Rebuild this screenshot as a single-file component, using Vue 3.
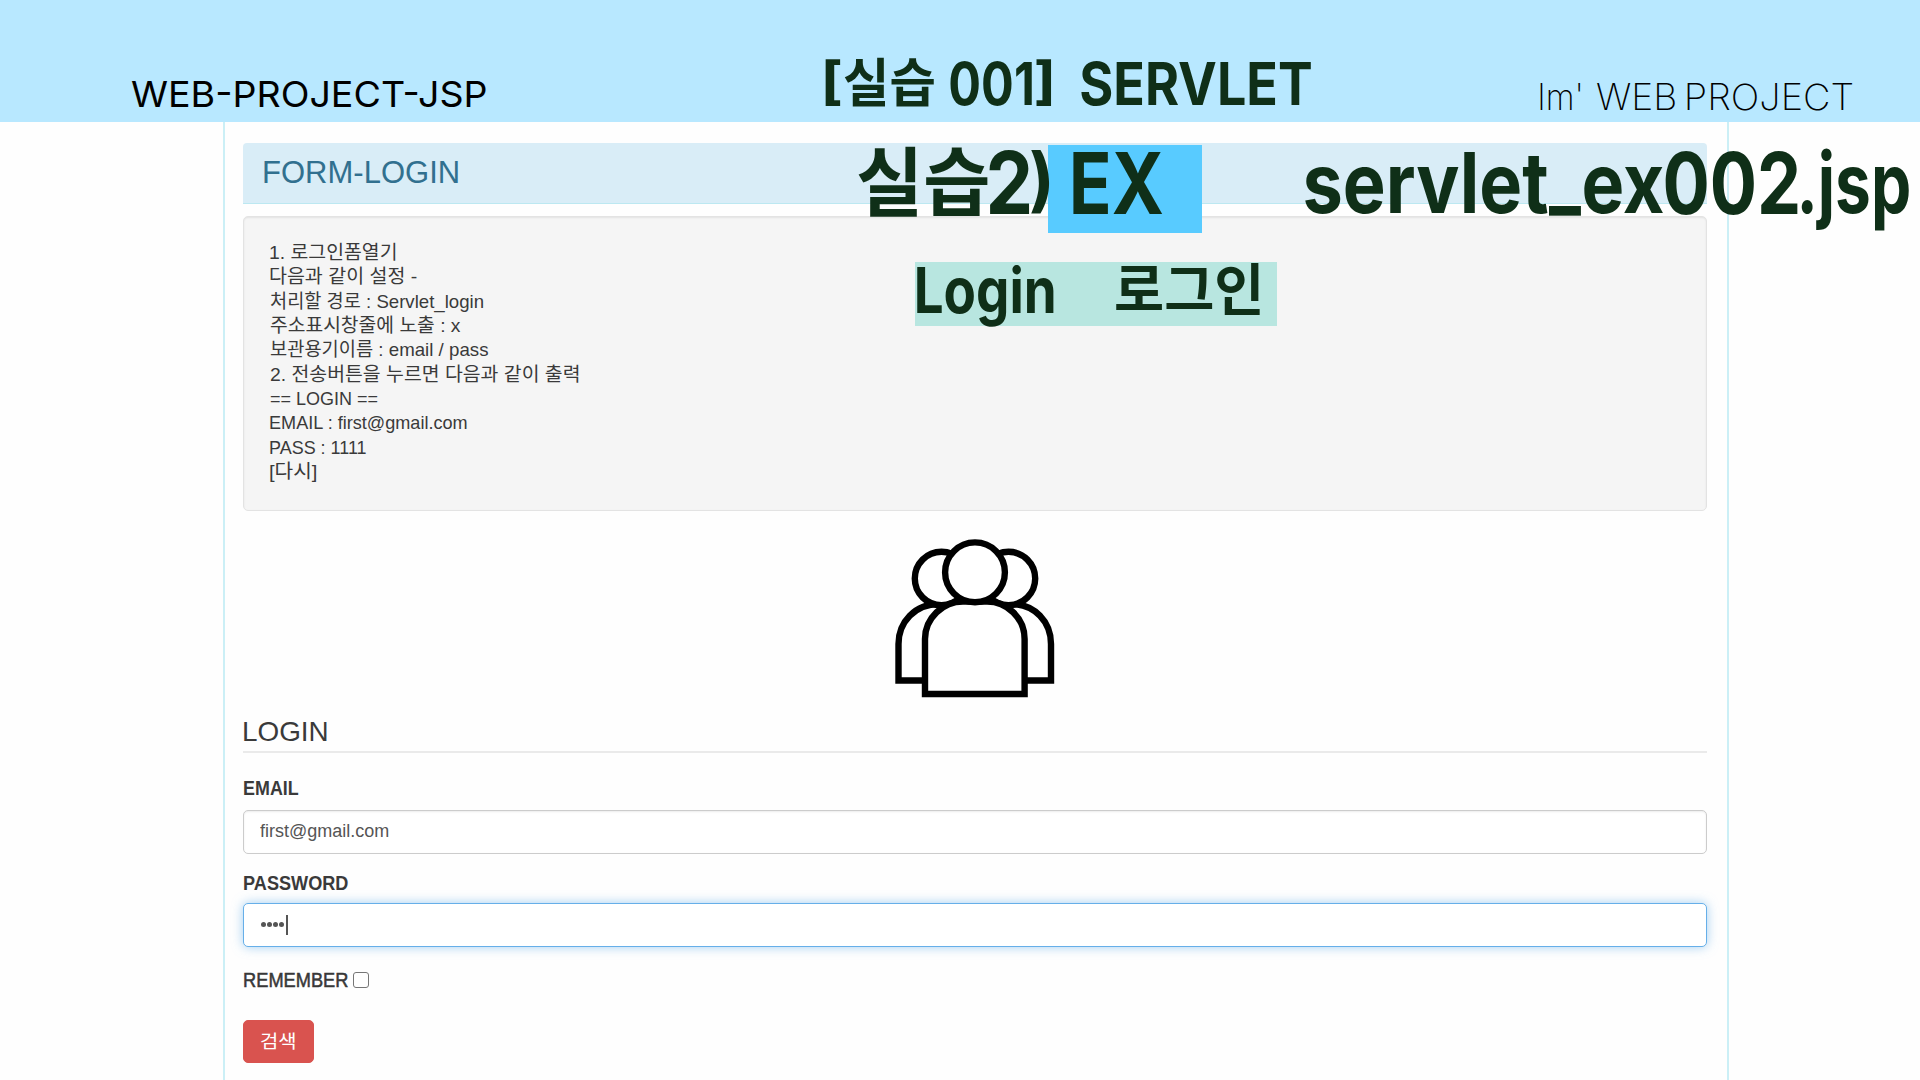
<script setup>
import { ref } from 'vue'

const email = ref('first@gmail.com')

// Scales a text horizontally so that its ink starts at the element's left edge
// and spans the given width.
const vInk = {
  mounted(el, { value }) {
    const cs = getComputedStyle(el)
    const ctx = document.createElement('canvas').getContext('2d')
    ctx.font = `${cs.fontWeight} ${cs.fontSize} ${cs.fontFamily}`
    const m = ctx.measureText(el.textContent)
    const ink = m.actualBoundingBoxRight + m.actualBoundingBoxLeft
    const s = value / ink
    el.style.transform = `translateX(${m.actualBoundingBoxLeft * s}px) scaleX(${s})`
  },
}

const titleParts = [
  { text: '[', w: 15.5, gap: 0, cls: 'latin bracket' },
  { text: '실습', w: 90, gap: 3, cls: 'hangul' },
  { text: '001', w: 82, gap: 16.5, cls: 'latin' },
  { text: ']', w: 15.5, gap: 3.5, cls: 'latin bracket' },
  { text: 'SERVLET', w: 230.5, gap: 30, cls: 'latin' },
]

const notes = [
  { text: '1. 로그인폼열기', w: 126 },
  { text: '다음과 같이 설정 -', w: 147 },
  { text: '처리할 경로 : Servlet_login', w: 213.5 },
  { text: '주소표시창줄에 노출 : x', w: 191 },
  { text: '보관용기이름 : email / pass', w: 218 },
  { text: '2. 전송버튼을 누르면 다음과 같이 출력', w: 309 },
  { text: '== LOGIN ==', w: 108 },
  { text: 'EMAIL : first@gmail.com', w: 197.5 },
  { text: 'PASS : 1111', w: 96 },
  { text: '[다시]', w: 46 },
]

// Captions laid over the page: x, baseline y, ink width, font size.
const captions = [
  { text: '실습', x: 857.5, y: 210.5, w: 129.5, size: 75, cls: 'hangul' },
  { text: '2', x: 989, y: 214, w: 40.5, size: 86, cls: 'latin' },
  { text: ')', x: 1031, y: 204, w: 18.5, size: 70, cls: 'latin' },
  { text: 'EX', x: 1072.5, y: 214, w: 89.5, size: 85, cls: 'latin' },
  { text: 'servlet', x: 1305, y: 214, w: 243, size: 84, cls: 'latin' },
  { text: '_', x: 1549, y: 206, w: 32, size: 86, cls: 'latin' },
  { text: 'ex', x: 1584, y: 214, w: 79, size: 84, cls: 'latin' },
  { text: '002', x: 1665, y: 214, w: 132.5, size: 85, cls: 'latin' },
  { text: '.jsp', x: 1801, y: 214, w: 108, size: 84, cls: 'latin' },
  { text: 'Login', x: 917, y: 313, w: 137, size: 63, cls: 'latin' },
  { text: '로그인', x: 1116, y: 310, w: 144, size: 56, cls: 'hangul' },
]
const ascent = { latin: 0.864, hangul: 0.936 }
</script>

<template>
  <div class="page">
    <header class="bar">
      <span v-ink="355.5" class="brand">WEB-PROJECT-JSP</span>
      <h1 class="title">
        <span
          v-for="p in titleParts"
          :key="p.text"
          class="part"
          :style="{ width: p.w + 'px', marginLeft: p.gap + 'px' }"
        ><span v-ink="p.w" class="ink" :class="p.cls">{{ p.text }}</span></span>
      </h1>
      <span class="tag">
        <span v-ink="40" class="ink im">Im'</span>
        <span v-ink="78" class="ink web">WEB</span>
        <span v-ink="165.5" class="ink">PROJECT</span>
      </span>
    </header>

    <main class="panel">
      <h2 class="heading"><span v-ink="194.5" class="ink">FORM-LOGIN</span></h2>

      <section class="well">
        <p v-for="n in notes" :key="n.text"><span v-ink="n.w" class="ink">{{ n.text }}</span></p>
      </section>

      <svg class="users" viewBox="0 0 160 160" fill="#fff" stroke="#000" stroke-width="6.4">
        <path d="M44 56C20 56 3.500 74 3.500 96V132.500H31" />
        <path d="M116 56C140 56 156 74 156 96V132.500H129" />
        <circle cx="46.500" cy="30.500" r="26.700" />
        <circle cx="113.500" cy="30.500" r="26.700" />
        <path d="M30 146V91C30 70 48 53.500 68 53.500H92C112 53.500 129.600 70 129.600 91V146Z" />
        <circle cx="80" cy="24.300" r="29.900" />
      </svg>

      <form class="form" @submit.prevent>
        <h3 class="legend"><span v-ink="82.5" class="ink">LOGIN</span></h3>
        <label class="label first"><span v-ink="54.5" class="ink">EMAIL</span></label>
        <input v-model="email" class="field" type="text" />
        <label class="label second"><span v-ink="104" class="ink">PASSWORD</span></label>
        <div class="field focused"><i v-for="n in 4" :key="n" class="dot"></i><i class="caret"></i></div>
        <label class="remember"><span v-ink="104" class="ink">REMEMBER</span><i class="check"></i></label>
        <button class="submit" type="submit"><span v-ink="34.5" class="ink">검색</span></button>
      </form>
    </main>

    <div class="mark blue"></div>
    <div class="mark green"></div>
    <span
      v-for="c in captions"
      :key="c.text"
      v-ink="c.w"
      class="caption"
      :class="c.cls"
      :style="{ left: c.x + 'px', top: c.y - c.size * ascent[c.cls] + 'px', fontSize: c.size + 'px' }"
    >{{ c.text }}</span>
  </div>
</template>

<style>
body {
  margin: 0;
  overflow: hidden;
}
</style>

<style scoped>
.page {
  position: relative;
  width: 1920px;
  height: 1080px;
  overflow: hidden;
  background: #fefefe;
  font-family: "Liberation Sans", "Noto Sans CJK KR", sans-serif;
  color: #3a3a3a;
}
.ink,
.brand,
.caption {
  display: inline-block;
  white-space: pre;
  transform-origin: 0 50%;
}
.latin {
  font-family: Inter, sans-serif;
  font-weight: 700;
}
.hangul {
  font-family: "Noto Sans CJK KR", sans-serif;
  font-weight: 700;
}
.bar {
  display: flex;
  align-items: flex-start;
  box-sizing: border-box;
  height: 122px;
  padding-left: 131px;
  background: #b8e8ff;
  font-family: Inter, sans-serif;
  color: #000;
}
.brand {
  width: 355.5px;
  margin-top: 76px;
  font-size: 36px;
  line-height: 36px;
  font-weight: 400;
}
.title {
  display: flex;
  align-items: baseline;
  width: 487px;
  margin: 53px 0 0 338.5px;
  font-size: 59px;
  line-height: 59px;
  color: #0f2f18;
}
.part {
  flex: none;
}
.title .hangul {
  position: relative;
  top: -3px;
  font-size: 52px;
}
.title .bracket {
  position: relative;
  top: -6px;
  font-size: 51px;
}
.tag {
  display: flex;
  margin: 79px 0 0 228px;
  font-size: 36px;
  line-height: 36px;
  font-weight: 200;
}
.im {
  width: 57px;
}
.web {
  width: 89.5px;
}
.panel {
  box-sizing: border-box;
  width: 1506px;
  height: 958px;
  margin-left: 223px;
  padding: 21px 20px 0 18px;
  border: solid #cbeff6;
  border-width: 0 2px;
}
.heading {
  box-sizing: border-box;
  height: 61px;
  margin: 0 0 12px;
  padding-left: 21px;
  border-bottom: 1px solid #bce8f1;
  border-radius: 4px 4px 0 0;
  background: #d9edf7;
  color: #31708f;
  font-size: 31.5px;
  line-height: 58px;
  font-weight: 400;
}
.well {
  box-sizing: border-box;
  height: 295px;
  padding: 24px 26px;
  border: 1px solid #e3e3e3;
  border-radius: 5px;
  background: #f5f5f5;
  box-shadow: inset 0 1px 2px rgba(0, 0, 0, 0.08);
  font-size: 19px;
  line-height: 24.35px;
}
.well p {
  margin: 0;
  height: 24.35px;
}
.users {
  display: block;
  width: 160px;
  height: 160px;
  margin: 37px auto 0;
  overflow: visible;
}
.form {
  display: flex;
  flex-direction: column;
  align-items: stretch;
  margin-top: 3px;
}
.legend {
  box-sizing: border-box;
  height: 42px;
  margin: 0;
  padding-left: 1px;
  border-bottom: 2px solid #eaeaea;
  font-size: 28px;
  line-height: 42px;
  font-weight: 400;
}
.label {
  height: 24px;
  padding-left: 1px;
  font-size: 20px;
  line-height: 24px;
  font-weight: 700;
}
.first {
  margin: 23px 0 10px;
}
.second {
  margin: 17px 0 8.5px;
}
.field {
  box-sizing: border-box;
  width: 100%;
  height: 43.5px;
  padding: 0 16px 1px;
  border: 1.5px solid #ccc;
  border-radius: 5px;
  outline: none;
  background: #fff;
  box-shadow: inset 0 1px 2px rgba(0, 0, 0, 0.08);
  color: #555;
  font: 18px "Liberation Sans", sans-serif;
}
.focused {
  display: flex;
  align-items: center;
  height: 44px;
  padding-left: 17px;
  border-color: #66afe9;
  box-shadow: 0 0 11px rgba(102, 175, 233, 0.6);
}
.dot {
  width: 5px;
  height: 5px;
  margin-right: 1px;
  border-radius: 50%;
  background: #555;
}
.caret {
  width: 1.5px;
  height: 20px;
  margin-left: 1px;
  background: #555;
}
.remember {
  display: flex;
  align-items: center;
  height: 24px;
  margin-top: 21px;
  padding-left: 1px;
  font-size: 20px;
  line-height: 24px;
}
.remember .ink {
  width: 109px;
  -webkit-text-stroke: 0.5px #333;
}
.check {
  box-sizing: border-box;
  width: 16px;
  height: 16px;
  border: 1px solid #767676;
  border-radius: 3px;
  background: #fff;
}
.submit {
  box-sizing: border-box;
  width: 70.5px;
  height: 43px;
  margin-top: 28px;
  padding: 0 0 3px 17px;
  border: 1px solid #d9534f;
  border-radius: 5px;
  background: #d9534f;
  color: #fff;
  font: 18.5px "Liberation Sans", "Noto Sans CJK KR", sans-serif;
  text-align: left;
}
.mark {
  position: absolute;
}
.blue {
  left: 1048px;
  top: 145px;
  width: 154px;
  height: 87.5px;
  background: #58cbff;
}
.green {
  left: 915px;
  top: 262px;
  width: 362px;
  height: 63.5px;
  background: #b8e6e0;
}
.caption {
  position: absolute;
  line-height: 1;
  color: #0f2f18;
}
</style>
